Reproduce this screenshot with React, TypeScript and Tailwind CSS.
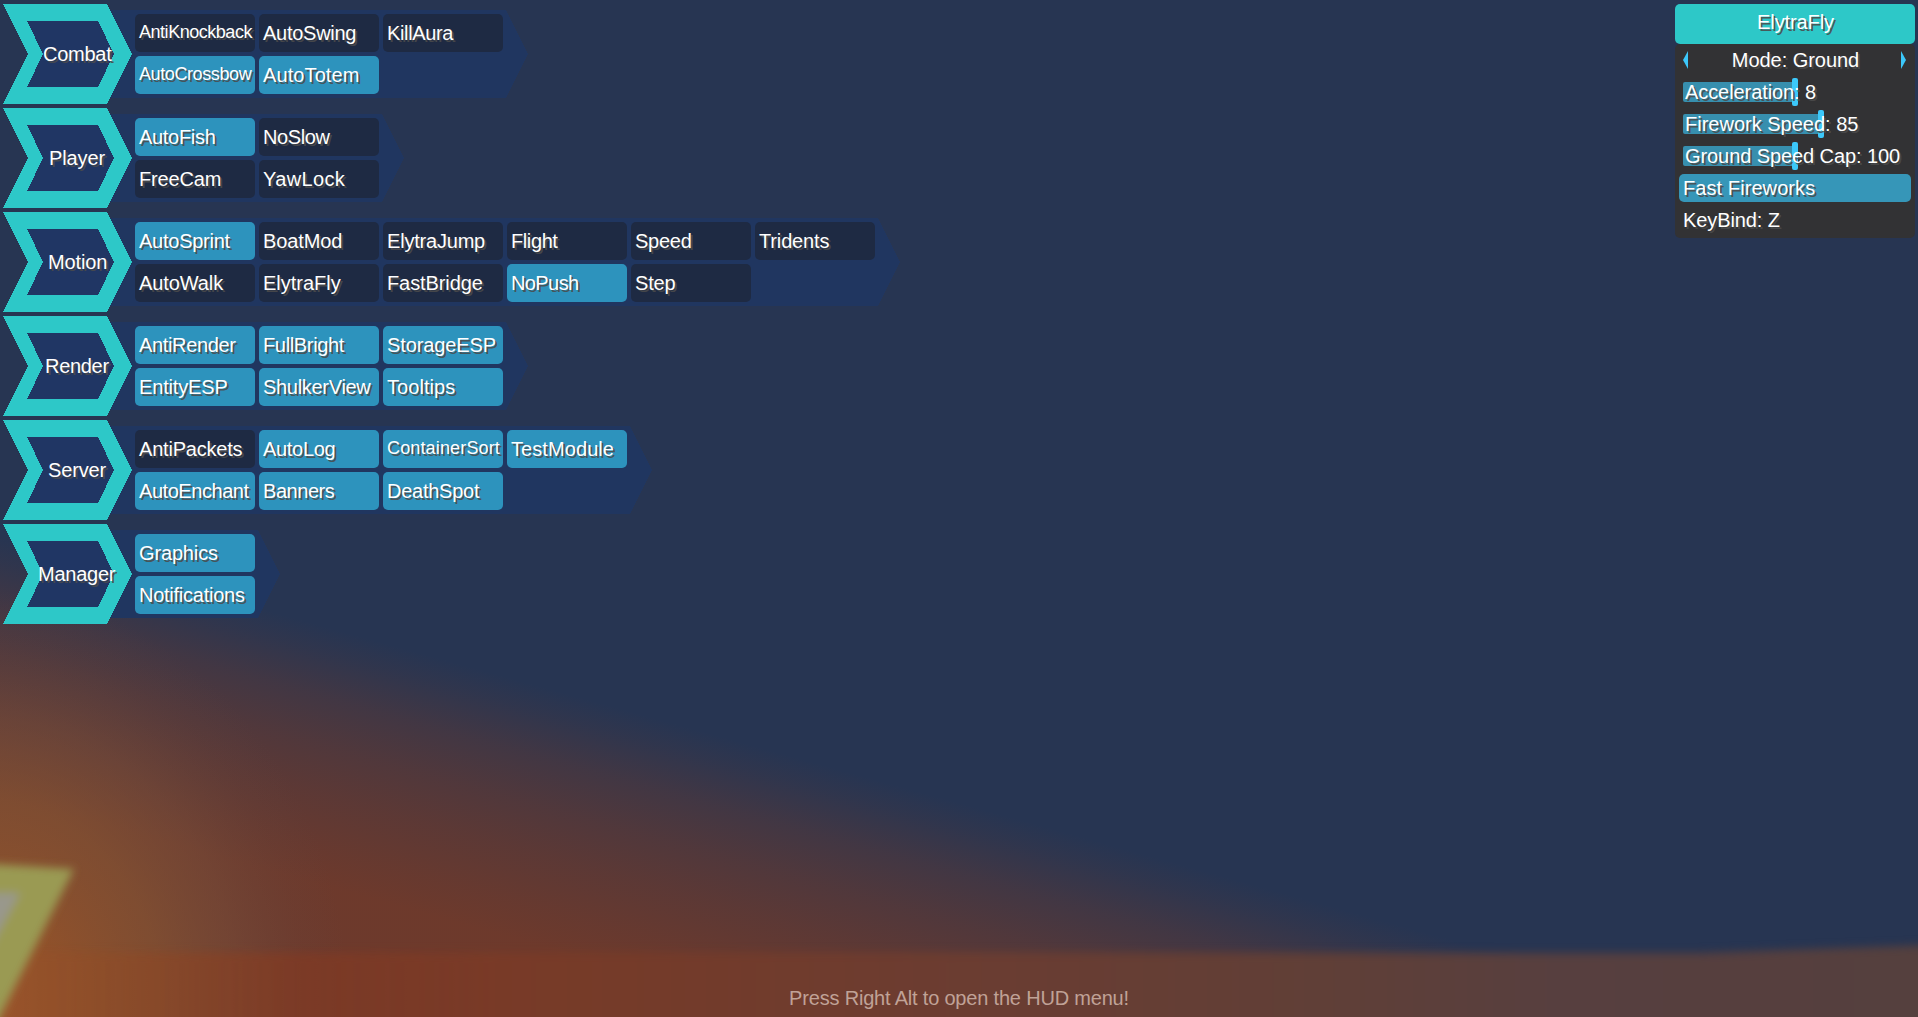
import React from 'react';

// name, enabled, letter spacing in px, compact label
type Mod = [name: string, on: boolean, tracking: number, small?: boolean];

const categories: { name: string; nx: string; tracking: number; cols: number; rows: Mod[][] }[] = [
  {
    name: 'Combat', nx: 'ml-[43px]', tracking: -0.25, cols: 3,
    rows: [
      [['AntiKnockback', false, -0.47, true], ['AutoSwing', false, -0.27], ['KillAura', false, -0.35]],
      [['AutoCrossbow', true, -0.4, true], ['AutoTotem', true, 0.1]],
    ],
  },
  {
    name: 'Player', nx: 'ml-[49px]', tracking: -0.1, cols: 2,
    rows: [
      [['AutoFish', true, -0.3], ['NoSlow', false, -0.4]],
      [['FreeCam', false, -0.15], ['YawLock', false, 0.35]],
    ],
  },
  {
    name: 'Motion', nx: 'ml-[48px]', tracking: -0.15, cols: 6,
    rows: [
      [['AutoSprint', true, -0.25], ['BoatMod', false, -0.1], ['ElytraJump', false, -0.2], ['Flight', false, -0.4], ['Speed', false, -0.25], ['Tridents', false, -0.15]],
      [['AutoWalk', false, -0.1], ['ElytraFly', false, 0], ['FastBridge', false, -0.1], ['NoPush', true, -0.6], ['Step', false, -0.2]],
    ],
  },
  {
    name: 'Render', nx: 'ml-[45px]', tracking: -0.3, cols: 3,
    rows: [
      [['AntiRender', true, -0.35], ['FullBright', true, -0.35], ['StorageESP', true, -0.1]],
      [['EntityESP', true, -0.15], ['ShulkerView', true, -0.3], ['Tooltips', true, 0.05]],
    ],
  },
  {
    name: 'Server', nx: 'ml-[48px]', tracking: -0.15, cols: 4,
    rows: [
      [['AntiPackets', false, -0.2], ['AutoLog', true, -0.3], ['ContainerSort', true, 0.15, true], ['TestModule', true, 0.08]],
      [['AutoEnchant', true, -0.45], ['Banners', true, -0.45], ['DeathSpot', true, -0.25]],
    ],
  },
  {
    name: 'Manager', nx: 'ml-[38px]', tracking: -0.25, cols: 1,
    rows: [[['Graphics', true, -0.15]], [['Notifications', true, -0.25]]],
  },
];

const shadow = '[text-shadow:2px_2px_0_rgba(75,75,75,0.9)]';

function Module({ mod }: { mod: Mod }) {
  const [name, on, tracking, small] = mod;
  return (
    <div className={`h-[38px] w-[120px] rounded-[5px] pl-1 ${on ? 'bg-[#2d93bd]' : 'bg-[#1e2a43]'}`}>
      <span
        className={`block whitespace-nowrap ${small ? 'text-[18px] leading-[37px]' : 'text-[20px] leading-[39px]'}`}
        style={{ letterSpacing: tracking }}
      >
        {name}
      </span>
    </div>
  );
}

function Category({ c }: { c: (typeof categories)[number] }) {
  const w = 124 * c.cols - 4 + 22;
  const end = 135 + 124 * c.cols - 1;
  return (
    <section className="relative flex h-[100px] w-max items-center">
      <svg className="absolute left-0 top-0" width={end + 24} height="100" viewBox={`0 0 ${end + 24} 100`} shapeRendering="crispEdges">
        <polygon points={`100,6 ${end},6 ${end + 22},50 ${end},94 100,94`} fill="#203660" />
        <polygon points="27,17 98,17 114,50 98,83 27,83 43,50" fill="#203664" />
        <path d="M3 0H107L132 50 107 100H3L28 50ZM27 17L43 50 27 83H98L114 50 98 17Z" fill="#2dc8c8" fillRule="evenodd" />
      </svg>
      <div className="relative w-[135px]">
        <span className={`block leading-[24px] ${c.nx}`} style={{ letterSpacing: c.tracking }}>{c.name}</span>
      </div>
      <div className="relative flex flex-col gap-1" style={{ width: w }}>
        {c.rows.map((r, i) => (
          <div key={i} className="flex gap-1">
            {r.map((m) => <Module key={m[0]} mod={m} />)}
          </div>
        ))}
      </div>
    </section>
  );
}

function Slider({ label, width, tracking = '' }: { label: string; width: string; tracking?: string }) {
  return (
    <div className="relative flex h-8 items-center px-2">
      <div className={`h-5 rounded-[2px] bg-[#378fae] ${width}`} />
      <div className="-ml-[3px] h-7 w-1.5 rounded-[2px] bg-[#3cc8fa]" />
      <span className={`absolute left-[10px] top-0 whitespace-nowrap leading-8 ${tracking}`}>{label}</span>
    </div>
  );
}

function Backdrop() {
  return (
    <svg className="absolute inset-0" width="1918" height="1017" viewBox="0 0 1918 1017">
      <defs>
        <linearGradient id="haze" gradientUnits="userSpaceOnUse" x1="640" y1="714" x2="573" y2="955">
          <stop offset="0" stopColor="#713a2a" stopOpacity="0" />
          <stop offset="0.1" stopColor="#713a2a" stopOpacity="0.12" />
          <stop offset="0.27" stopColor="#713a2a" stopOpacity="0.36" />
          <stop offset="0.46" stopColor="#713a2a" stopOpacity="0.56" />
          <stop offset="0.65" stopColor="#713a2a" stopOpacity="0.72" />
          <stop offset="0.85" stopColor="#713a2a" stopOpacity="0.86" />
          <stop offset="1" stopColor="#713a2a" stopOpacity="0.95" />
        </linearGradient>
        <radialGradient id="glow" gradientUnits="userSpaceOnUse" cx="0" cy="0" r="1" gradientTransform="translate(-20 1010) scale(370 420)">
          <stop offset="0" stopColor="#a4582b" stopOpacity="0.95" />
          <stop offset="0.25" stopColor="#99582b" stopOpacity="0.76" />
          <stop offset="0.5" stopColor="#8b5a35" stopOpacity="0.58" />
          <stop offset="0.7" stopColor="#7c5640" stopOpacity="0.36" />
          <stop offset="0.88" stopColor="#6a4d44" stopOpacity="0.12" />
          <stop offset="1" stopColor="#604a48" stopOpacity="0" />
        </radialGradient>
        <linearGradient id="ground" x1="0" x2="1" y1="0" y2="0">
          <stop offset="0" stopColor="#9b552b" />
          <stop offset="0.07" stopColor="#8f4d28" />
          <stop offset="0.17" stopColor="#7e3a25" />
          <stop offset="0.33" stopColor="#753b29" />
          <stop offset="0.52" stopColor="#6a3d32" />
          <stop offset="0.68" stopColor="#603f37" />
          <stop offset="0.8" stopColor="#573f3f" />
          <stop offset="1" stopColor="#55403e" />
        </linearGradient>
        <linearGradient id="fade" gradientUnits="userSpaceOnUse" x1="0" y1="0" x2="500" y2="0">
          <stop offset="0" stopColor="#fff" stopOpacity="0.6" />
          <stop offset="1" stopColor="#fff" stopOpacity="1" />
        </linearGradient>
        <mask id="groundMask" maskUnits="userSpaceOnUse" x="-40" y="900" width="2000" height="160">
          <rect x="-40" y="900" width="2000" height="160" fill="url(#fade)" />
        </mask>
        <filter id="soft" x="-20%" y="-20%" width="140%" height="140%"><feGaussianBlur stdDeviation="4" /></filter>
        <filter id="edge" filterUnits="userSpaceOnUse" x="-60" y="900" width="2060" height="200" colorInterpolationFilters="sRGB"><feGaussianBlur stdDeviation="4.5" /></filter>
      </defs>
      <rect width="1918" height="1017" fill="#273552" />
      <rect width="1918" height="1017" fill="url(#haze)" />
      <rect width="1918" height="1017" fill="url(#glow)" />
      <g mask="url(#groundMask)">
        <polygon points="-40,952 1700,953 1960,944 1960,1080 -40,1080" fill="url(#ground)" filter="url(#edge)" />
      </g>
      <g filter="url(#soft)">
        <polygon points="-60,861 74,869 -50,1116" fill="#9a9a52" />
        <polygon points="-60,893 20,893 -60,1040" fill="#99988c" />
      </g>
    </svg>
  );
}

export default function App() {
  return (
    <div className="relative h-[1017px] w-[1918px] overflow-hidden font-['Liberation_Sans',Arial,sans-serif] text-[20px] text-white">
      <Backdrop />
      <main className={`relative flex h-full flex-col justify-between pt-1 ${shadow}`}>
        <div className="flex items-start justify-between pr-[3px]">
          <div className="flex flex-col gap-1">
            {categories.map((c) => <Category key={c.name} c={c} />)}
          </div>
          <aside className="w-60">
            <h1 className="h-10 rounded-[5px] bg-[#2dc8c8] pl-[1px] text-center leading-[37px] tracking-[-0.1px]">ElytraFly</h1>
            <div className="h-[194px] rounded-[5px] bg-[#323234]">
              <div className="flex h-8 items-center justify-between pl-[9px] pr-[9px]">
                <svg className="-ml-px" width="5" height="18" viewBox="0 0 5 18"><path d="M5 0V18L0 9Z" fill="#3cc8fa" /></svg>
                <span className="pl-0.5 leading-8 tracking-[-0.05px]">Mode: Ground</span>
                <svg width="5" height="18" viewBox="0 0 5 18"><path d="M0 0V18L5 9Z" fill="#3cc8fa" /></svg>
              </div>
              <Slider label="Acceleration: 8" width="w-[112px]" tracking="tracking-[-0.08px]" />
              <Slider label="Firework Speed: 85" width="w-[138px]" />
              <Slider label="Ground Speed Cap: 100" width="w-[112px]" tracking="tracking-[-0.08px]" />
              <div className="mx-1 mt-0.5 h-7 rounded-[5px] bg-[#3696b8] pl-1 leading-7 tracking-[0.08px]">Fast Fireworks</div>
              <div className="mt-1 h-7 pl-2 leading-7 tracking-[-0.1px]">KeyBind: Z</div>
            </div>
          </aside>
        </div>
        <footer className="pb-[5px] text-center leading-[28px] tracking-[-0.19px] text-[#c0a297] [text-shadow:none]">Press Right Alt to open the HUD menu!</footer>
      </main>
    </div>
  );
}
